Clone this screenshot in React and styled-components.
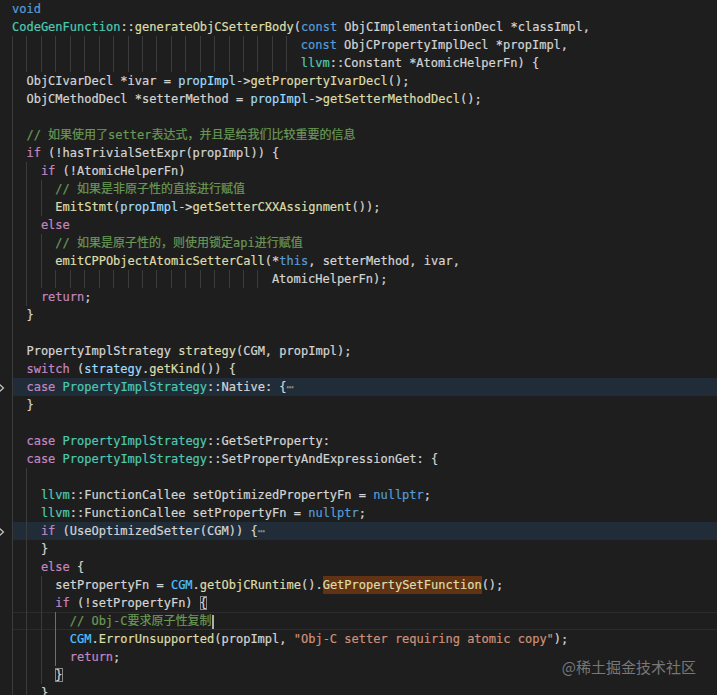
import React from "react";
import styled, { createGlobalStyle, css } from "styled-components";

const Global = createGlobalStyle`
  html, body {
    margin: 0;
    padding: 0;
    background: #1e1e1e;
    overflow: hidden;
  }
`;

const COLORS = {
  kw: "#569cd6",
  ctrl: "#c586c0",
  type: "#4ec9b0",
  fn: "#dcdcaa",
  var: "#9cdcfe",
  cst: "#4fc1ff",
  cmt: "#6a9955",
  str: "#ce9178",
  plain: "#d4d4d4",
  fold: "#8d8d8d",
};

const Editor = styled.div`
  position: relative;
  height: 100vh;
  overflow: hidden;
  background: #1e1e1e;
  display: flex;
  flex-direction: column;
  font-family: "DejaVu Sans Mono", "Noto Sans CJK SC", monospace;
  font-size: 12px;
  line-height: 18px;
  color: #d4d4d4;
  -webkit-text-stroke: 0.2px currentColor;
`;

const Line = styled.div`
  display: flex;
  height: 18px;
  flex: 0 0 18px;
`;

const Gutter = styled.div`
  width: 12px;
  flex: 0 0 12px;
  height: 18px;
  overflow: hidden;
  display: flex;
  align-items: flex-start;
`;

const Code = styled.div`
  flex: 1;
  height: 18px;
  white-space: pre;
  ${(p) =>
    p.$mode === "fold" &&
    css`
      background: #202d39;
    `}
  ${(p) =>
    p.$mode === "current" &&
    css`
      box-shadow: inset 0 1px 0 #2c2c2c, inset 0 -1px 0 #2c2c2c;
    `}
`;

const Guide = styled.span`
  display: inline-block;
  width: 2ch;
  height: 18px;
  vertical-align: top;
  box-sizing: border-box;
  border-left: 1px solid ${(p) => (p.$active ? "#6e6e6e" : "#3b3b3b")};
`;

const Token = styled.span`
  color: ${(p) => COLORS[p.$kind] || COLORS.plain};
`;

const Bracket = styled.span`
  color: #d4d4d4;
  box-shadow: inset 0 0 0 1px #8a8a8a;
`;

const Match = styled.span`
  display: inline-block;
  height: 18px;
  vertical-align: top;
  background: #613214;
  color: #dcdcaa;
`;

const Cursor = styled.span`
  display: inline-block;
  width: 2px;
  height: 14px;
  margin-top: 3px;
  vertical-align: top;
  background: #aeafad;
`;

const Watermark = styled.div`
  position: absolute;
  right: 21px;
  bottom: 19px;
  font-family: "Noto Sans CJK SC", sans-serif;
  font-size: 15px;
  line-height: 18px;
  color: rgba(210, 210, 210, 0.5);
  -webkit-text-stroke: 0;
`;

const Chevron = () => (
  <svg width="12" height="18" viewBox="0 0 12 18">
    <polyline
      points="-1.5,5.5 3.5,10 -1.5,14.5"
      fill="none"
      stroke="#c5c5c5"
      strokeWidth="1.2"
    />
  </svg>
);

const t = (kind, text) => ({ kind, text });
const P = (text) => t("plain", text);

const lines = [
  { indent: 0, tokens: [t("kw", "void")] },
  {
    indent: 0,
    tokens: [
      t("type", "CodeGenFunction"),
      P("::"),
      t("fn", "generateObjCSetterBody"),
      P("("),
      t("kw", "const"),
      P(" ObjCImplementationDecl *classImpl,"),
    ],
  },
  { indent: 40, tokens: [t("kw", "const"), P(" ObjCPropertyImplDecl *propImpl,")] },
  {
    indent: 40,
    tokens: [t("type", "llvm"), P("::Constant *AtomicHelperFn) {")],
  },
  {
    indent: 2,
    tokens: [
      P("ObjCIvarDecl *ivar = "),
      t("var", "propImpl"),
      P("->"),
      t("fn", "getPropertyIvarDecl"),
      P("();"),
    ],
  },
  {
    indent: 2,
    tokens: [
      P("ObjCMethodDecl *setterMethod = "),
      t("var", "propImpl"),
      P("->"),
      t("fn", "getSetterMethodDecl"),
      P("();"),
    ],
  },
  { indent: 2, blank: true, tokens: [] },
  {
    indent: 2,
    tokens: [t("cmt", "// 如果使用了setter表达式，并且是给我们比较重要的信息")],
  },
  {
    indent: 2,
    tokens: [t("ctrl", "if"), P(" (!hasTrivialSetExpr(propImpl)) {")],
  },
  { indent: 4, tokens: [t("ctrl", "if"), P(" (!AtomicHelperFn)")] },
  { indent: 6, tokens: [t("cmt", "// 如果是非原子性的直接进行赋值")] },
  {
    indent: 6,
    tokens: [
      t("fn", "EmitStmt"),
      P("("),
      t("var", "propImpl"),
      P("->"),
      t("fn", "getSetterCXXAssignment"),
      P("());"),
    ],
  },
  { indent: 4, tokens: [t("ctrl", "else")] },
  { indent: 6, tokens: [t("cmt", "// 如果是原子性的，则使用锁定api进行赋值")] },
  {
    indent: 6,
    tokens: [
      t("fn", "emitCPPObjectAtomicSetterCall"),
      P("(*"),
      t("kw", "this"),
      P(", setterMethod, ivar,"),
    ],
  },
  { indent: 36, tokens: [P("AtomicHelperFn);")] },
  { indent: 4, tokens: [t("ctrl", "return"), P(";")] },
  { indent: 2, tokens: [P("}")] },
  { indent: 2, blank: true, tokens: [] },
  {
    indent: 2,
    tokens: [P("PropertyImplStrategy "), t("fn", "strategy"), P("(CGM, propImpl);")],
  },
  {
    indent: 2,
    tokens: [
      t("ctrl", "switch"),
      P(" ("),
      t("var", "strategy"),
      P("."),
      t("fn", "getKind"),
      P("()) {"),
    ],
  },
  {
    indent: 2,
    fold: true,
    tokens: [
      t("ctrl", "case"),
      P(" "),
      t("type", "PropertyImplStrategy"),
      P("::Native: {"),
      t("fold", "⋯"),
    ],
  },
  { indent: 2, tokens: [P("}")] },
  { indent: 2, blank: true, tokens: [] },
  {
    indent: 2,
    tokens: [
      t("ctrl", "case"),
      P(" "),
      t("type", "PropertyImplStrategy"),
      P("::GetSetProperty:"),
    ],
  },
  {
    indent: 2,
    tokens: [
      t("ctrl", "case"),
      P(" "),
      t("type", "PropertyImplStrategy"),
      P("::SetPropertyAndExpressionGet: {"),
    ],
  },
  { indent: 4, blank: true, tokens: [] },
  {
    indent: 4,
    tokens: [
      t("type", "llvm"),
      P("::FunctionCallee setOptimizedPropertyFn = "),
      t("kw", "nullptr"),
      P(";"),
    ],
  },
  {
    indent: 4,
    tokens: [
      t("type", "llvm"),
      P("::FunctionCallee setPropertyFn = "),
      t("kw", "nullptr"),
      P(";"),
    ],
  },
  {
    indent: 4,
    fold: true,
    tokens: [t("ctrl", "if"), P(" (UseOptimizedSetter(CGM)) {"), t("fold", "⋯")],
  },
  { indent: 4, tokens: [P("}")] },
  { indent: 4, tokens: [t("ctrl", "else"), P(" {")] },
  {
    indent: 6,
    tokens: [
      P("setPropertyFn = "),
      t("cst", "CGM"),
      P("."),
      t("fn", "getObjCRuntime"),
      P("()."),
      { match: "GetPropertySetFunction" },
      P("();"),
    ],
  },
  {
    indent: 6,
    tokens: [t("ctrl", "if"), P(" (!setPropertyFn) "), { bracket: "{" }],
  },
  {
    indent: 8,
    current: true,
    active: 3,
    tokens: [t("cmt", "// Obj-C要求原子性复制"), { cursor: true }],
  },
  {
    indent: 8,
    active: 3,
    tokens: [
      t("cst", "CGM"),
      P("."),
      t("fn", "ErrorUnsupported"),
      P("(propImpl, "),
      t("str", '"Obj-C setter requiring atomic copy"'),
      P(");"),
    ],
  },
  { indent: 8, active: 3, tokens: [t("ctrl", "return"), P(";")] },
  { indent: 6, tokens: [{ bracket: "}" }] },
  { indent: 4, tokens: [P("}")] },
];

const renderToken = (tok, i) => {
  if (tok.match) return <Match key={i}>{tok.match}</Match>;
  if (tok.bracket) return <Bracket key={i}>{tok.bracket}</Bracket>;
  if (tok.cursor) return <Cursor key={i} />;
  return (
    <Token key={i} $kind={tok.kind}>
      {tok.text}
    </Token>
  );
};

const CodeLine = ({ line }) => {
  const units = Math.floor(line.indent / 2);
  const mode = line.fold ? "fold" : line.current ? "current" : undefined;
  return (
    <Line>
      <Gutter>{line.fold && <Chevron />}</Gutter>
      <Code $mode={mode}>
        {Array.from({ length: units }, (_, i) => (
          <Guide key={i} $active={line.active === i} />
        ))}
        {line.tokens.map(renderToken)}
      </Code>
    </Line>
  );
};

export default function App() {
  return (
    <>
      <Global />
      <Editor>
        {lines.map((line, i) => (
          <CodeLine key={i} line={line} />
        ))}
        <Watermark>@稀土掘金技术社区</Watermark>
      </Editor>
    </>
  );
}
